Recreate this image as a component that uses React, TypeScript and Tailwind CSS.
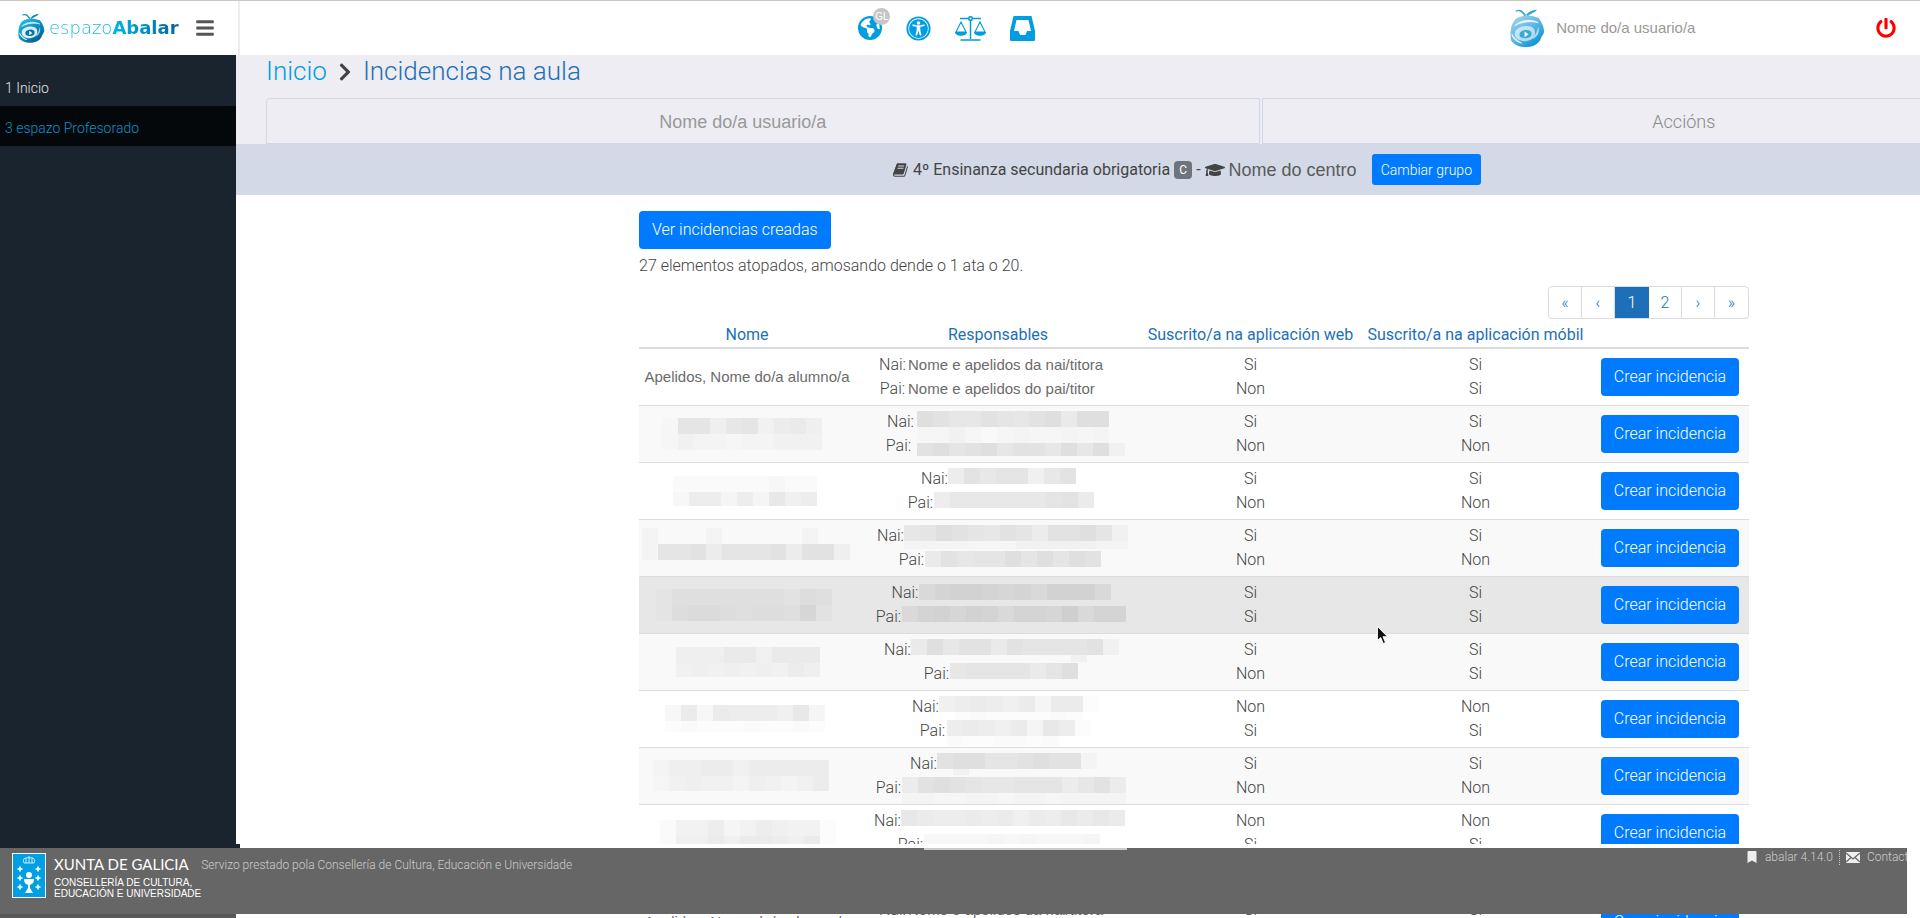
import type { ReactElement, ReactNode } from 'react'
import { FaBars, FaBookmark, FaChevronRight, FaGraduationCap, FaPowerOff, FaUniversalAccess } from 'react-icons/fa'
import { FaEarthAmericas } from 'react-icons/fa6'

/* ─────────────────────────────────────────────
 * Types
 * ───────────────────────────────────────────── */

/** Pixelated block: one string per row, one hex digit (darkness) per tile */
interface MosaicData {
  rows: string[]
  heights: number[]
}

interface Guardian {
  label: string
  /** natural width of the whole line, used to centre it */
  width: number
  gap?: number
  name?: string
  mosaic?: MosaicData
}

interface Student {
  name?: string
  nameWidth?: number
  mosaic?: MosaicData
  guardians: Guardian[]
  web: string[]
  mobile: string[]
  active?: boolean
}

/* ─────────────────────────────────────────────
 * Data
 * ───────────────────────────────────────────── */

const students: Student[] = [
  {
    name: 'Apelidos, Nome do/a alumno/a',
    guardians: [
      { label: 'Nai:', width: 238, gap: 2, name: 'Nome e apelidos da nai/titora' },
      { label: 'Pai:', width: 238, gap: 2, name: 'Nome e apelidos do pai/titor' },
    ],
    web: ['Si', 'Non'],
    mobile: ['Si', 'Si'],
  },
  {
    nameWidth: 170,
    mosaic: { rows: ['1884783564', '1322122333'], heights: [16, 16] },
    guardians: [
      { label: 'Nai:', width: 222, gap: 3, mosaic: { rows: ['a9779879a6aa', '113101211212'], heights: [16, 16] } },
      { label: 'Pai:', width: 226, gap: 5, mosaic: { rows: ['0000000000000', '9a89a7997a7a3'], heights: [8, 13] } },
    ],
    web: ['Si', 'Non'],
    mobile: ['Si', 'Non'],
  },
  {
    nameWidth: 148,
    mosaic: { rows: ['222222322', '377474967'], heights: [16, 14] },
    guardians: [
      { label: 'Nai:', width: 154, mosaic: { rows: ['7b9aa69b'], heights: [16] } },
      { label: 'Pai:', width: 182, mosaic: { rows: ['7999999ab8'], heights: [16] } },
    ],
    web: ['Si', 'Non'],
    mobile: ['Si', 'Non'],
  },
  {
    nameWidth: 210,
    mosaic: { rows: ['2000200000200', '2889588895994', '0000000000000'], heights: [16, 16, 8] },
    guardians: [
      { label: 'Nai:', width: 242, mosaic: { rows: ['78a98798599a83', '22221113333322'], heights: [16, 8] } },
      { label: 'Pai:', width: 200, mosaic: { rows: ['00000000000', '69788a8a8a9'], heights: [2, 16] } },
    ],
    web: ['Si', 'Non'],
    mobile: ['Si', 'Non'],
  },
  {
    active: true,
    nameWidth: 182,
    mosaic: { rows: ['13333333243', '14554344372'], heights: [16, 16] },
    guardians: [
      { label: 'Nai:', width: 213, mosaic: { rows: ['000000000000', '689987869996'], heights: [2, 16] } },
      { label: 'Pai:', width: 246, mosaic: { rows: ['6897986887a688'], heights: [16] } },
    ],
    web: ['Si', 'Si'],
    mobile: ['Si', 'Si'],
  },
  {
    nameWidth: 142,
    mosaic: { rows: ['444663666', '343434354'], heights: [16, 14] },
    guardians: [
      { label: 'Nai:', width: 228, mosaic: { rows: ['6a79969888893', '0000000000300'], heights: [16, 7] } },
      { label: 'Pai:', width: 150, mosaic: { rows: ['7888868a'], heights: [16] } },
    ],
    web: ['Si', 'Non'],
    mobile: ['Si', 'Si'],
  },
  {
    nameWidth: 164,
    mosaic: { rows: ['3838777694', '1211121121'], heights: [16, 11] },
    guardians: [
      { label: 'Nai:', width: 172, mosaic: { rows: ['6787684881', '0121111210'], heights: [16, 8] } },
      { label: 'Pai:', width: 158, gap: 1, mosaic: { rows: ['787684971', '211221200'], heights: [16, 10] } },
    ],
    web: ['Non', 'Si'],
    mobile: ['Non', 'Si'],
  },
  {
    nameWidth: 188,
    mosaic: { rows: ['24455355555', '13433243235'], heights: [16, 15] },
    guardians: [
      { label: 'Nai:', width: 176, mosaic: { rows: ['9aa889a992', '0300000000'], heights: [16, 6] } },
      { label: 'Pai:', width: 246, mosaic: { rows: ['59a98778885795', '22112212212222'], heights: [16, 11] } },
    ],
    web: ['Si', 'Non'],
    mobile: ['Si', 'Non'],
  },
  {
    nameWidth: 174,
    mosaic: { rows: ['25574576551', '26686887681'], heights: [16, 9] },
    guardians: [
      { label: 'Nai:', width: 248, mosaic: { rows: ['98778786879898'], heights: [16] } },
      { label: 'Pai:', width: 202, mosaic: { rows: ['33334343334'], heights: [16] } },
    ],
    web: ['Non', 'Si'],
    mobile: ['Non', 'Si'],
  },
]

const lastStudent: Student = {
  name: 'Apelidos, Nome do/a alumno/a',
  guardians: [
    { label: 'Nai:', width: 238, gap: 2, name: 'Nome e apelidos da nai/titora' },
    { label: 'Pai:', width: 238, gap: 2, name: 'Nome e apelidos do pai/titor' },
  ],
  web: ['Si', 'Non'],
  mobile: ['Si', 'Non'],
}

const pages = ['«', '‹', '1', '2', '›', '»']

/* ─────────────────────────────────────────────
 * Drawings
 * ───────────────────────────────────────────── */

function Mosaic({ rows, heights }: MosaicData): ReactElement {
  const width = rows[0].length * 16
  const height = heights.reduce((a, b) => a + b, 0)
  return (
    <svg width={width} height={height} className="block shrink-0 overflow-visible" shapeRendering="crispEdges" aria-hidden="true">
      {rows.map((row, r) => {
        const y = heights.slice(0, r).reduce((a, b) => a + b, 0)
        return row.split('').map((level, c) => (
          <rect key={`${r}-${c}`} x={c * 16} y={y} width={16} height={heights[r]} fillOpacity={parseInt(level, 16) / 100} />
        ))
      })}
    </svg>
  )
}

function Mascot({ className, light }: { className: string, light?: boolean }): ReactElement {
  const id = light ? 'mascot-light' : 'mascot-dark'
  return (
    <svg viewBox="0 0 36 40" className={className} aria-hidden="true">
      <defs>
        <linearGradient id={id} x1="0" y1="0" x2="0.800" y2="1">
          <stop offset="0" stopColor={light ? '#a9d9ef' : '#2cc6ec'} />
          <stop offset="0.500" stopColor={light ? '#62b9e2' : '#0b93c6'} />
          <stop offset="1" stopColor={light ? '#0090d4' : '#04588c'} />
        </linearGradient>
      </defs>
      <path d="M16 7C14 2 10 0 6 2c4-1 7 1 9 5zM17 6c2-3 6-4 10-5-1 2-6 3-9 6z" fill={light ? '#2fa5d6' : '#0b86b5'} stroke={light ? '#2fa5d6' : '#0b86b5'} />
      <path d="M6 10c6-4 17-4 23-1 3 3 6 9 6 14 0 3-3 5-4 9-3 5-9 7-15 7S4 37 1 32c-1-6-1-16 5-22z" fill={`url(#${id})`} />
      <path d="M5 17c6-6 17-7 24-3-7-2-17-1-24 3zM2 26c1 5 5 8 10 9-4-2-8-5-10-9z" fill="#fff" fillOpacity="0.700" stroke="#fff" strokeOpacity="0.700" />
      <path d="M29 18c2 6-1 11-6 13 3-4 5-8 6-13z" fill="#fff" fillOpacity="0.600" />
      <path d="M5 24c2-7 17-9 20-3 3 7-3 12-10 12-6 0-11-3-10-9z" fill="#fff" fillOpacity={light ? 0.6 : 0.85} />
      <path d="M10 25c1-4 10-5 12-1 1 4-2 6-6 6s-7-1-6-5z" fill={light ? '#3aa9da' : '#0a75ad'} />
      <path d="M15 23l4 3-4 3z" fill="#fff" />
    </svg>
  )
}

function ScaleIcon(): ReactElement {
  return (
    <svg viewBox="0 0 31 25" className="h-[25px] w-[31px]" fill="none" stroke="currentColor" strokeWidth="1.500" aria-hidden="true">
      <path d="M5 2.500h21M15.500 4v19M5.500 24h20" />
      <circle cx="15.500" cy="2.500" r="1.800" fill="#fff" />
      <path d="M6 6L1 16h10zM25 6l-5 10h10z" strokeWidth="1.100" />
      <path d="M0 16h12c0 5-12 5-12 0zM19 16h12c0 5-12 5-12 0z" fill="currentColor" stroke="none" />
    </svg>
  )
}

function InboxIcon(): ReactElement {
  return (
    <svg viewBox="0 0 25 25" className="size-[25px]" aria-hidden="true">
      <path fillRule="evenodd" fill="currentColor" d="M3.500 0h18l3.500 15v9q0 1-1 1H1q-1 0-1-1V15zM6.500 4L4 15h4.500l1.500 4h5.500l1.500-4H21L18.500 4z" />
    </svg>
  )
}

function EnvelopeIcon(): ReactElement {
  return (
    <svg viewBox="0 0 14 11" className="h-[11px] w-[14px]" aria-hidden="true">
      <rect width="14" height="11" fill="#eee" />
      <path d="M0 1l7 6 7-6M0 10l5-4.500M14 10L9 5.500" fill="none" stroke="#666" strokeWidth="1.300" />
    </svg>
  )
}

function BookIcon(): ReactElement {
  return (
    <svg viewBox="0 0 1792 1792" className="size-4" fill="currentColor" aria-hidden="true">
      <path d="M1639 478q40 57 18 129l-275 906q-19 64-76.500 107.500t-122.500 43.500h-923q-77 0-148.500-53.500t-99.500-131.500q-24-67-2-127 0-4 3-27t4-37q1-8-3-21.500t-3-19.500q2-11 8-21t16.500-23.500 16.500-23.500q23-38 45-91.500t30-91.500q3-10 .5-30t-.5-28q3-11 17-28t17-23q21-36 42-92t25-90q1-9-2.500-32t.5-28q4-13 22-30.500t22-22.500q19-26 42.500-84.500t27.500-96.500q1-8-3-25.500t-2-26.500q2-8 9-18t18-23 17-21q8-12 16.500-30.500t15-35 16-36 19.500-32 26.500-23.500 36-11.500 47.500 5.500l-1 3q38-9 51-9h761q74 0 114 56t18 130l-274 906q-36 119-71.500 153.500t-128.500 34.500h-869q-27 0-38 15-11 16-1 43 24 70 144 70h923q29 0 56-15.500t35-41.500l300-987q7-22 5-57 38 15 59 43zm-1064 2q-4 13 2 22.500t20 9.500h608q13 0 25.500-9.500t16.500-22.500l21-64q4-13-2-22.500t-20-9.500h-608q-13 0-25.500 9.500t-16.500 22.500zm-83 256q-4 13 2 22.500t20 9.500h608q13 0 25.500-9.500t16.500-22.500l21-64q4-13-2-22.500t-20-9.500h-608q-13 0-25.500 9.500t-16.500 22.500z" />
    </svg>
  )
}

function Crest(): ReactElement {
  const crosses = [[8, 16], [8, 25], [8, 34], [26, 16], [26, 25], [26, 34]]
  return (
    <svg viewBox="0 0 34 45" className="h-[45px] w-[34px]" aria-hidden="true">
      <rect x="0.500" y="0.500" width="33" height="44" fill="#009ee3" stroke="#fff" />
      <path d="M12 10c-2-4 1-6 5-5 4-1 7 1 5 5zM17 3v7M14 5v5M20 5v5" fill="none" stroke="#fff" strokeWidth="0.800" />
      {crosses.map(([x, y]) => (
        <path key={`${x}-${y}`} d={`M${x - 2.5} ${y}h5M${x} ${y - 2.5}v5`} stroke="#fff" strokeWidth="1.600" />
      ))}
      <circle cx="17" cy="22" r="3" fill="#fff" />
      <path d="M12 26h10c0 4-2 5-4 6v3l3 5h-8l3-5v-3c-2-1-4-2-4-6z" fill="#fff" />
    </svg>
  )
}

/* ─────────────────────────────────────────────
 * Table pieces
 * ───────────────────────────────────────────── */

function PrimaryButton({ children }: { children: ReactNode }): ReactElement {
  return (
    <button type="button" className="h-[38px] rounded bg-[#007bff] px-[13px] text-base font-light whitespace-nowrap text-white">
      {children}
    </button>
  )
}

function GuardianLine({ guardian }: { guardian: Guardian }): ReactElement {
  const { label, width, gap = 0, name, mosaic } = guardian
  return (
    <div className="mx-auto flex h-6" style={{ width }}>
      <span className="w-[27px] shrink-0 leading-6" style={{ marginRight: gap }}>{label}</span>
      {name && (
        <span className="font-['Liberation_Sans',sans-serif] text-[15px] leading-6 font-normal whitespace-nowrap text-[#6b6b6b]">
          {name}
        </span>
      )}
      {mosaic && <div className="pt-px"><Mosaic {...mosaic} /></div>}
    </div>
  )
}

function StudentRow({ student }: { student: Student }): ReactElement {
  return (
    <tr className={student.active ? 'border-t border-[#dcdcdc] bg-[#e7e7e7]' : 'border-t border-[#dcdcdc] even:bg-[#f9f9f9]'}>
      <td className="h-[57px] p-0">
        {student.name && (
          <span className="font-['Liberation_Sans',sans-serif] text-[15px] font-normal whitespace-nowrap text-[#6b6b6b]">
            {student.name}
          </span>
        )}
        {student.mosaic && (
          <div className="mx-auto" style={{ width: student.nameWidth }}>
            <Mosaic {...student.mosaic} />
          </div>
        )}
      </td>
      <td className="p-0">
        {student.guardians.map(g => <GuardianLine key={g.label} guardian={g} />)}
      </td>
      <td className="p-0">
        {student.web.map((v, i) => <div key={i} className="leading-6">{v}</div>)}
      </td>
      <td className="p-0">
        {student.mobile.map((v, i) => <div key={i} className="leading-6">{v}</div>)}
      </td>
      <td className="p-0"><PrimaryButton>Crear incidencia</PrimaryButton></td>
    </tr>
  )
}

/* ─────────────────────────────────────────────
 * Page sections
 * ───────────────────────────────────────────── */

function TopBar(): ReactElement {
  return (
    <header className="flex h-[55px] shrink-0 items-center border-t border-[#cbc7c0] bg-white">
      <div className="flex h-full w-60 shrink-0 items-center border-r-2 border-[#ededf0] pl-[18px]">
        <a href="#inicio" className="flex items-center">
          <Mascot className="h-[31px] w-[27px]" />
          <span className="ml-1 bg-linear-to-r from-[#1fb4de] via-[#00b5e8] to-[#03659b] bg-clip-text font-['DejaVu_Sans',sans-serif] text-lg leading-6 text-transparent">
            <span className="font-extralight">espazo</span>
            <span className="font-bold">Abalar</span>
          </span>
        </a>
        <button type="button" aria-label="Menú" className="ml-4 text-[#555]">
          <FaBars className="size-5" />
        </button>
      </div>
      <div className="grow-[620]" />
      <nav className="flex items-center text-[#009de0]">
        <a href="#idioma" className="relative" aria-label="Idioma">
          <FaEarthAmericas className="size-6" />
          <span className="absolute -top-2 left-[15px] flex size-[17px] items-center justify-center rounded-full bg-[#c6c6c6] font-['Liberation_Sans',sans-serif] text-[10px] text-white">GL</span>
        </a>
        <a href="#accesibilidade" className="ml-6" aria-label="Accesibilidade"><FaUniversalAccess className="size-[25px]" /></a>
        <a href="#legal" className="ml-6" aria-label="Aviso legal"><ScaleIcon /></a>
        <a href="#bandexa" className="ml-6" aria-label="Bandexa"><InboxIcon /></a>
      </nav>
      <div className="grow-[476]" />
      <div className="flex items-center">
        <Mascot light className="h-[39px] w-[35px]" />
        <span className="ml-[11px] font-['Liberation_Sans',sans-serif] text-[15px] font-normal text-[#999]">Nome do/a usuario/a</span>
      </div>
      <div className="grow-[181]" />
      <button type="button" aria-label="Saír" className="mr-6 text-[#f00]"><FaPowerOff className="size-5" /></button>
    </header>
  )
}

function Sidebar(): ReactElement {
  return (
    <aside className="w-[236px] shrink-0 bg-[#1a242f] pt-[11px]">
      <a href="#inicio" className="flex h-10 items-center pt-1 pl-[5px] text-sm text-[#e4e4e4]">1 Inicio</a>
      <a href="#profesorado" className="flex h-10 items-center bg-[#05080b] pt-1 pl-[5px] text-sm text-[#0d8fca]">3 espazo Profesorado</a>
    </aside>
  )
}

function GroupBar(): ReactElement {
  return (
    <div className="flex h-[51px] items-center justify-center bg-[#d3d9e7] pr-[14px] text-[#444]">
      <BookIcon />
      <span className="ml-1 text-base font-normal">4º Ensinanza secundaria obrigatoria</span>
      <span className="ml-1 flex h-[18px] w-[18px] items-center justify-center rounded bg-[#6c757d] text-xs font-normal text-white">C</span>
      <span className="mx-1 font-normal">-</span>
      <FaGraduationCap className="size-5" />
      <span className="ml-1 font-['Liberation_Sans',sans-serif] text-lg font-normal text-[#5a5a5a]">Nome do centro</span>
      <button type="button" className="ml-[15px] h-[31px] rounded-[3px] bg-[#007bff] px-[9px] text-sm text-white">Cambiar grupo</button>
    </div>
  )
}

function Pagination(): ReactElement {
  return (
    <nav aria-label="Paxinación" className="flex h-[33px] justify-end">
      <div className="flex overflow-hidden rounded border border-[#dcdcdc]">
        {pages.map(p => (
          <a
            key={p}
            href={`#p${p}`}
            className={
              p === '1'
                ? 'flex w-[34px] items-center justify-center bg-[#1d70b7] text-white'
                : 'flex w-[33px] items-center justify-center border-r border-[#dcdcdc] text-[#1d70b7] last:border-r-0'
            }
          >
            {p}
          </a>
        ))}
      </div>
    </nav>
  )
}

function Footer(): ReactElement {
  return (
    <footer className="absolute inset-x-0 bottom-1">
      <div className="flex h-1 bg-white">
        <div className="w-60 bg-[#1a242f]" />
      </div>
      <div className="relative mr-[13px] flex h-[66px] justify-between overflow-hidden bg-[#666] text-xs text-[#ccc]">
        {/* lower edge of the pixelated name that spills over the bar */}
        <div className="absolute top-0 left-[924px] h-0.5 w-[203px] bg-[#ccc]" />
        <div className="flex pt-[5px] pl-3">
          <Crest />
          <div className="ml-2 pt-[2px] whitespace-nowrap text-white">
            <div className="font-[Lato,sans-serif] text-[15px] leading-[18px] font-normal">XUNTA DE GALICIA</div>
            <div className="mt-1 font-['Liberation_Sans',sans-serif] text-[10px] leading-[11px] font-normal">
              CONSELLERÍA DE CULTURA,
              <br />
              EDUCACIÓN E UNIVERSIDADE
            </div>
          </div>
          <span className="pt-1 leading-4">Servizo prestado pola Consellería de Cultura, Educación e Universidade</span>
        </div>
        <div className="-mr-2 flex h-[18px] items-center">
          <FaBookmark className="h-3 w-[10px] text-[#eee]" />
          <span className="ml-2">abalar 4.14.0</span>
          <span className="mx-[6px] h-[15px] border-l border-dotted border-[#ccc]" />
          <EnvelopeIcon />
          <a href="#contacto" className="ml-[7px]">Contacto</a>
        </div>
      </div>
    </footer>
  )
}

export default function App(): ReactElement {
  return (
    <div className="relative flex h-screen flex-col overflow-hidden bg-white font-[Roboto,sans-serif] text-base font-light text-[#444]">
      <TopBar />
      <div className="flex min-h-0 grow">
        <Sidebar />
        {/* the content keeps the full window width and runs past the right edge */}
        <main className="w-screen shrink-0 pr-1">
          <div className="bg-[#ededf3] pl-[30px]">
            <h1 className="flex h-[43px] items-center pb-[10px] text-[26px] text-[#1d70b7]">
              <a href="#inicio" className="text-[#009de0]">Inicio</a>
              <FaChevronRight className="mx-2 size-5 text-[#444]" />
              Incidencias na aula
            </h1>
            <div className="flex h-[46px] gap-0.5 pr-[46px] text-lg text-[#888]">
              <div className="flex w-[54%] items-center justify-center rounded-tl border border-[#d0d8e8] pt-[2px] pr-10 font-['Liberation_Sans',sans-serif] font-normal text-[#999]">Nome do/a usuario/a</div>
              <div className="flex grow items-center justify-center border border-[#d0d8e8] pt-[2px]">Accións</div>
            </div>
          </div>
          <GroupBar />
          <section className="mx-auto w-[1110px] pt-4">
            <PrimaryButton>Ver incidencias creadas</PrimaryButton>
            <p className="mt-[5px] mb-2 leading-6">27 elementos atopados, amosando dende o 1 ata o 20.</p>
            <Pagination />
            <table className="w-full table-fixed border-collapse text-center">
              <colgroup>
                <col className="w-[216px]" />
                <col className="w-[286px]" />
                <col className="w-[219px]" />
                <col className="w-[231px]" />
                <col className="w-[158px]" />
              </colgroup>
              <thead>
                <tr className="border-b-2 border-[#dcdcdc] text-[#1d70b7]">
                  <th className="h-[29px] p-0 pt-1 font-normal">Nome</th>
                  <th className="p-0 pt-1 font-normal">Responsables</th>
                  <th className="p-0 pt-1 font-normal whitespace-nowrap">Suscrito/a na aplicación web</th>
                  <th className="p-0 pt-1 font-normal whitespace-nowrap">Suscrito/a na aplicación móbil</th>
                  <th className="p-0" aria-label="Accións" />
                </tr>
              </thead>
              <tbody>
                {students.map((s, i) => <StudentRow key={i} student={s} />)}
                <tr><td colSpan={5} className="h-8 p-0" /></tr>
                <StudentRow student={lastStudent} />
              </tbody>
            </table>
          </section>
        </main>
      </div>
      <div className="absolute bottom-0 left-0 h-1 w-[236px] bg-[#585858]" />
      <Footer />
      <svg viewBox="0 0 12 19" className="absolute top-[626px] left-[1377px] h-[19px] w-3" aria-hidden="true">
        <path d="M0.500 0.500v14l3.200-3 2.600 6 2.200-1-2.500-5.800h4.500z" fill="#111" stroke="#fff" strokeWidth="0.900" />
      </svg>
    </div>
  )
}
